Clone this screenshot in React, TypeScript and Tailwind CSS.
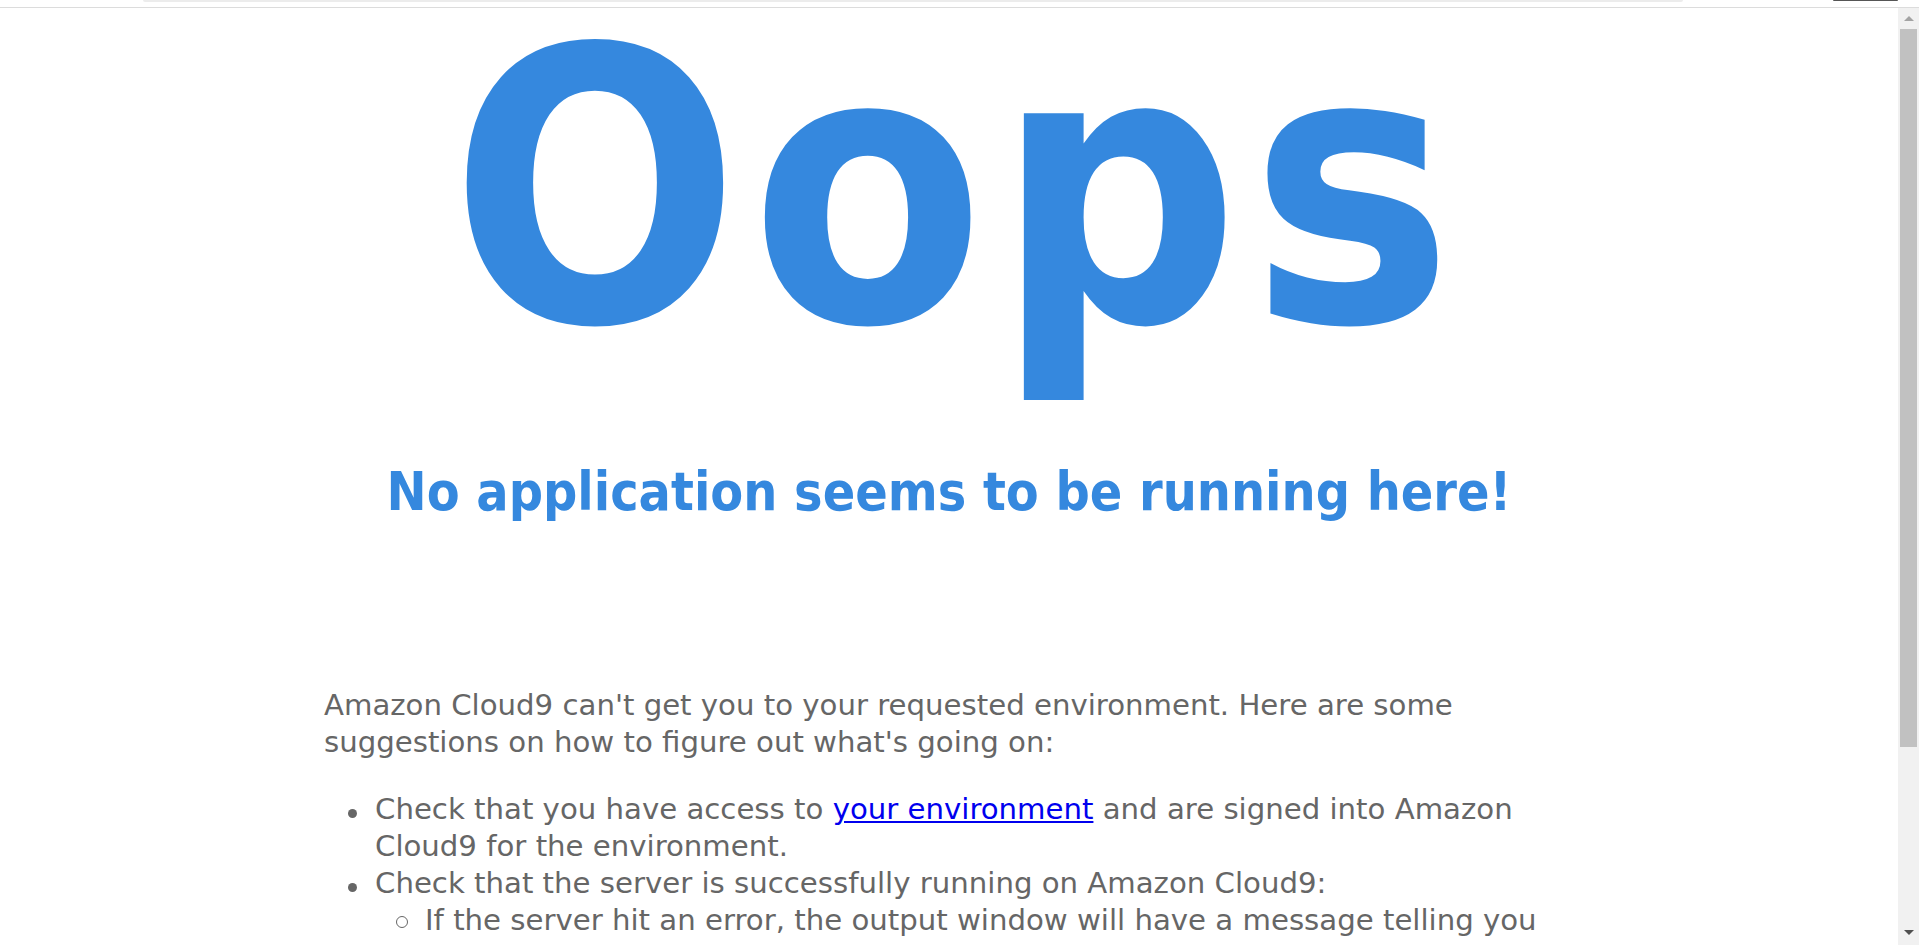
import React from 'react';

const condensed = {
  fontFamily: "'DejaVu Sans Condensed', 'DejaVu Sans', sans-serif",
};

function TopBar() {
  return (
    <div className="flex h-[8px] shrink-0 items-start border-b border-[#dcdcdc] bg-white">
      <div className="ml-[143px] h-[2px] w-[1540px] rounded-b-[3px] bg-[#ececec]" />
      <div className="ml-[150px] h-[1px] w-[65px] rounded-b-[2px] bg-[#555555]" />
    </div>
  );
}

function Scrollbar() {
  return (
    <div className="flex w-[21px] shrink-0 flex-col bg-[#f1f1f1]">
      <div className="flex h-[21px] items-center justify-center">
        <svg width="10" height="5" viewBox="0 0 10 5">
          <path d="M5 0 L10 5 L0 5 Z" fill="#a3a3a3" />
        </svg>
      </div>
      <div className="mx-[2px] h-[718px] bg-[#c1c1c1]" />
      <div className="flex-1" />
      <div className="flex h-[17px] items-start justify-center pt-[2px]">
        <svg width="10" height="5" viewBox="0 0 10 5">
          <path d="M0 0 L10 0 L5 5 Z" fill="#505050" />
        </svg>
      </div>
    </div>
  );
}

function Disc() {
  return (
    <span className="flex w-[51px] shrink-0 justify-end pr-[18px] pt-[18px]">
      <span className="h-[9px] w-[9px] rounded-full bg-[#666666]" />
    </span>
  );
}

function Circle() {
  return (
    <span className="flex w-[50px] shrink-0 justify-end pr-[17px] pt-[14px]">
      <span className="h-[12px] w-[12px] rounded-full border border-[#666666]" />
    </span>
  );
}

export default function App() {
  return (
    <div className="flex h-[945px] w-[1919px] flex-col overflow-hidden bg-white">
      <TopBar />
      <div className="flex min-h-0 flex-1">
        <main className="min-w-0 flex-1 overflow-hidden">
          <div className="text-center font-bold text-[#3588de]" style={condensed}>
            <div className="pl-[15px] text-[380px] leading-[364px] tracking-[10px]">Oops</div>
            <h2 className="mt-[89px] text-[53.3px] leading-[62px]">
              No application seems to be running here!
            </h2>
          </div>

          <div
            className="mx-auto mt-[164px] w-[1250px] text-[29.2px] leading-[36.6px] text-[#666666]"
            style={{ fontFamily: "'DejaVu Sans', sans-serif" }}
          >
            <p>
              Amazon Cloud9 can't get you to your requested environment. Here are some
              suggestions on how to figure out what's going on:
            </p>
            <ul className="mt-[31px] leading-[37px]">
              <li className="flex">
                <Disc />
                <span>
                  Check that you have access to{' '}
                  <a href="#" className="text-[#0000ee] underline">
                    your environment
                  </a>{' '}
                  and are signed into Amazon Cloud9 for the environment.
                </span>
              </li>
              <li className="flex">
                <Disc />
                <div>
                  <span>Check that the server is successfully running on Amazon Cloud9:</span>
                  <ul>
                    <li className="flex">
                      <Circle />
                      <span>
                        If the server hit an error, the output window will have a message telling you
                        what went wrong.
                      </span>
                    </li>
                    <li className="flex">
                      <Circle />
                      <span>
                        Make sure your server is listening on port 8080, 8081 or 8082 at IP 127.0.0.1.
                      </span>
                    </li>
                  </ul>
                </div>
              </li>
              <li className="flex">
                <Disc />
                <span>
                  If you are still having trouble, reload the environment or contact your
                  administrator.
                </span>
              </li>
            </ul>
          </div>
        </main>
        <Scrollbar />
      </div>
    </div>
  );
}
